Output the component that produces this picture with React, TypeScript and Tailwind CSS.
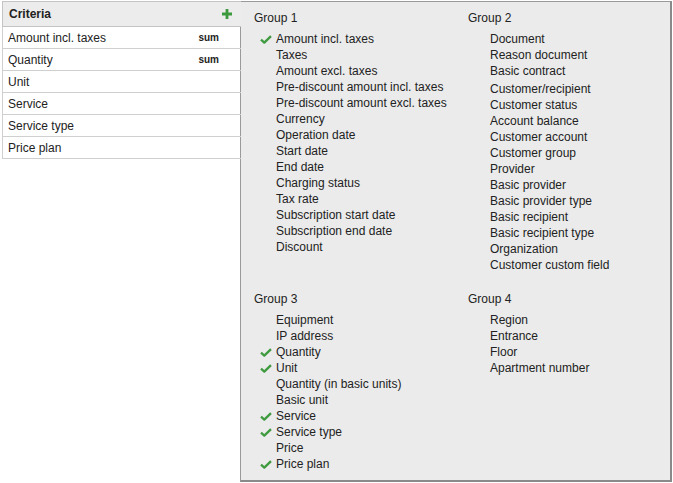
import React from "react";

interface Field {
  label: string;
  checked?: boolean;
  gapBefore?: boolean;
}

interface Group {
  title: string;
  fields: Field[];
}

const criteria = [
  { label: "Amount incl. taxes", agg: "sum" },
  { label: "Quantity", agg: "sum" },
  { label: "Unit" },
  { label: "Service" },
  { label: "Service type" },
  { label: "Price plan" },
];

const groups: Group[] = [
  {
    title: "Group 1",
    fields: [
      { label: "Amount incl. taxes", checked: true },
      { label: "Taxes" },
      { label: "Amount excl. taxes" },
      { label: "Pre-discount amount incl. taxes" },
      { label: "Pre-discount amount excl. taxes" },
      { label: "Currency" },
      { label: "Operation date" },
      { label: "Start date" },
      { label: "End date" },
      { label: "Charging status" },
      { label: "Tax rate" },
      { label: "Subscription start date" },
      { label: "Subscription end date" },
      { label: "Discount" },
    ],
  },
  {
    title: "Group 2",
    fields: [
      { label: "Document" },
      { label: "Reason document" },
      { label: "Basic contract" },
      { label: "Customer/recipient", gapBefore: true },
      { label: "Customer status" },
      { label: "Account balance" },
      { label: "Customer account" },
      { label: "Customer group" },
      { label: "Provider" },
      { label: "Basic provider" },
      { label: "Basic provider type" },
      { label: "Basic recipient" },
      { label: "Basic recipient type" },
      { label: "Organization" },
      { label: "Customer custom field" },
    ],
  },
  {
    title: "Group 3",
    fields: [
      { label: "Equipment" },
      { label: "IP address" },
      { label: "Quantity", checked: true },
      { label: "Unit", checked: true },
      { label: "Quantity (in basic units)" },
      { label: "Basic unit" },
      { label: "Service", checked: true },
      { label: "Service type", checked: true },
      { label: "Price" },
      { label: "Price plan", checked: true },
    ],
  },
  {
    title: "Group 4",
    fields: [
      { label: "Region" },
      { label: "Entrance" },
      { label: "Floor" },
      { label: "Apartment number" },
    ],
  },
];

const Check = () => (
  <svg width="12" height="9" viewBox="0 0 12 9" className="block">
    <path
      d="M1 4.6 L4.3 7.6 L11 1.2"
      fill="none"
      stroke="#3f9b3f"
      strokeWidth="2.3"
      strokeLinejoin="round"
    />
  </svg>
);

const Plus = () => (
  <svg width="10" height="10" viewBox="0 0 10 10" className="block">
    <path d="M3.6 0h2.8v3.6H10v2.8H6.4V10H3.6V6.4H0V3.6h3.6z" fill="#3c9a3c" />
  </svg>
);

const GroupList = ({ group }: { group: Group }) => (
  <div>
    <div className="h-4 leading-4">{group.title}</div>
    <ul className="mt-[5px]">
      {group.fields.map((f) => (
        <li
          key={f.label}
          className={`flex h-4 items-center leading-4 ${f.gapBefore ? "mt-[2px]" : ""}`}
        >
          <span className="flex w-[22px] justify-center pl-[1px]">
            {f.checked && <Check />}
          </span>
          <span>{f.label}</span>
        </li>
      ))}
    </ul>
  </div>
);

const App = () => {
  return (
    <div
      className="relative h-[483px] w-[673px] bg-white text-[12px] text-[#222]"
      style={{ fontFamily: '"Liberation Sans", Arial, sans-serif' }}
    >
      {/* field picker, opened from the + in the header */}
      <div className="absolute left-[240px] top-[1px] h-[481px] w-[432px] border border-r-2 border-b-2 border-[#9a9a9a] border-r-[#8a8a8a] border-b-[#8a8a8a] bg-[#ebebeb] pl-[13px] pt-[8px]">
        <div className="grid grid-cols-[214px_1fr] gap-y-[18px]">
          {groups.map((g) => (
            <GroupList key={g.title} group={g} />
          ))}
        </div>
      </div>

      {/* criteria table; header sits over the picker edge so they join */}
      <div className="absolute left-[2px] top-[1px] z-10 w-[239px]">
        <div className="flex h-[26px] items-center justify-between border-l border-t border-b border-[#c4c4c4] bg-[#ececec] pl-[6px] pr-[9px] font-bold">
          <span>Criteria</span>
          <Plus />
        </div>
        {criteria.map((c) => (
          <div
            key={c.label}
            className="flex h-[22px] items-center justify-between border-b border-l border-[#cfcfcf] pl-[5px] pr-[22px]"
          >
            <span>{c.label}</span>
            {c.agg && <span className="text-[10px] font-bold">{c.agg}</span>}
          </div>
        ))}
      </div>
    </div>
  );
};

export default App;
